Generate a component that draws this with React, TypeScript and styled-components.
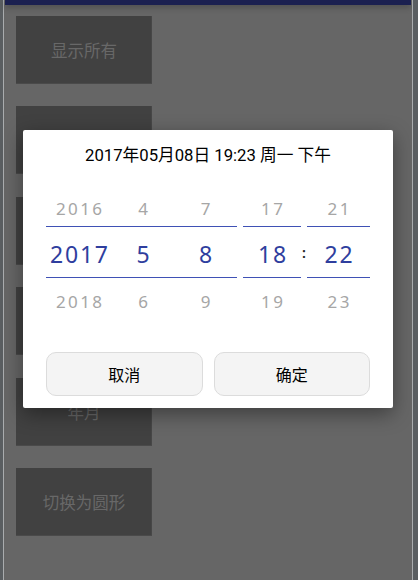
import React from 'react';
import styled, { createGlobalStyle } from 'styled-components';

const Global = createGlobalStyle`
  html, body { margin: 0; padding: 0; }
  body {
    width: 418px;
    height: 580px;
    overflow: hidden;
    font-family: Roboto, "Noto Sans CJK SC", sans-serif;
  }
`;

const Screen = styled.div`
  position: relative;
  width: 418px;
  height: 580px;
  display: flex;
  background: #5a5e61;
`;

const Edge = styled.div<{ $w: number }>`
  flex: none;
  width: ${(p) => p.$w}px;
  background: #5a5e61;
`;

const Rule = styled.div`
  flex: none;
  width: 1px;
  background: #a9acae;
`;

const Content = styled.div`
  flex: 1;
  background: #666666;
  display: flex;
  flex-direction: column;
`;

const TopBar = styled.div`
  height: 5px;
  margin: 0 1px;
  background: #1b2050;
  box-shadow: 0 2px 6px rgba(0, 0, 0, 0.3);
`;

const ButtonList = styled.div`
  display: flex;
  flex-direction: column;
  gap: 22.4px;
  padding: 11px 0 0 12px;
`;

const GhostButton = styled.div`
  width: 136px;
  height: 68px;
  background: #414141;
  color: #686868;
  font-family: "Noto Sans CJK SC", sans-serif;
  font-size: 16.5px;
  display: flex;
  align-items: center;
  justify-content: center;
  box-shadow: inset 0 -1px 0 #4a4a4a, inset -1px 0 0 #474747;
`;

const Dialog = styled.div`
  position: absolute;
  left: 23px;
  top: 130px;
  width: 370px;
  height: 278px;
  background: #ffffff;
  border-radius: 2px;
  box-shadow: 0 6px 20px rgba(0, 0, 0, 0.4);
  display: flex;
  flex-direction: column;
`;

const Title = styled.div`
  height: 48px;
  display: flex;
  align-items: center;
  justify-content: center;
  color: #000;
  font-family: Roboto, "Noto Sans CJK SC", sans-serif;
  font-size: 16.7px;
`;

const Picker = styled.div`
  margin-top: 12px;
  padding: 0 23px;
  display: flex;
`;

const Group = styled.div<{ $w: number }>`
  flex: none;
  width: ${(p) => p.$w}px;
  display: flex;
  flex-direction: column;
`;

const Row = styled.div<{ $cols: string; $kind: 'top' | 'mid' | 'bottom' }>`
  display: grid;
  grid-template-columns: ${(p) => p.$cols};
  height: ${(p) => (p.$kind === 'top' ? 36 : p.$kind === 'mid' ? 52 : 46)}px;
  box-sizing: border-box;
  ${(p) =>
    p.$kind === 'mid'
      ? `border-top: 1px solid #3f51b5; border-bottom: 1px solid #3f51b5; padding-top: 4px;`
      : ''}
`;

const Cell = styled.div<{ $active?: boolean }>`
  display: flex;
  align-items: center;
  justify-content: center;
  font-family: "Noto Sans", "Open Sans", sans-serif;
  font-size: ${(p) => (p.$active ? 23 : 17)}px;
  letter-spacing: ${(p) => (p.$active ? 1.8 : 2.4)}px;
  text-indent: ${(p) => (p.$active ? 1.8 : 2.4)}px;
  color: ${(p) => (p.$active ? '#2f3e9e' : '#a6a6a6')};
`;

const Sep = styled.div`
  flex: none;
  width: 6px;
  display: flex;
  flex-direction: column;
`;

const SepCell = styled.div<{ $h: number }>`
  height: ${(p) => p.$h}px;
  display: flex;
  align-items: center;
  justify-content: center;
  padding-top: ${(p) => (p.$h === 52 ? 2 : 0)}px;
  box-sizing: border-box;
  font-family: Roboto, sans-serif;
  font-size: 14px;
  font-weight: bold;
  color: #222;
`;

const Actions = styled.div`
  margin-top: 28px;
  padding: 0 23px;
  display: flex;
  gap: 11px;
`;

const ActionButton = styled.button`
  flex: 1;
  height: 44px;
  border: 1px solid #dcdcdc;
  border-radius: 10px;
  background: #f4f4f4;
  color: #000;
  font-family: "Noto Sans CJK SC", sans-serif;
  font-size: 16px;
  padding: 0;
`;

type Col = { top: string; mid: string; bottom: string };

const PickerGroup: React.FC<{ w: number; cols: string; data: Col[] }> = ({ w, cols, data }) => (
  <Group $w={w}>
    <Row $cols={cols} $kind="top">
      {data.map((d, i) => (
        <Cell key={i}>{d.top}</Cell>
      ))}
    </Row>
    <Row $cols={cols} $kind="mid">
      {data.map((d, i) => (
        <Cell key={i} $active>
          {d.mid}
        </Cell>
      ))}
    </Row>
    <Row $cols={cols} $kind="bottom">
      {data.map((d, i) => (
        <Cell key={i}>{d.bottom}</Cell>
      ))}
    </Row>
  </Group>
);

// Labels of the buttons hidden behind the dialog are not visible in the reference.
const menu = ['显示所有', '', '', '', '年月', '切换为圆形'];

export default function App() {
  return (
    <>
      <Global />
      <Screen>
        <Edge $w={3} />
        <Rule />
        <Content>
          <TopBar />
          <ButtonList>
            {menu.map((m, i) => (
              <GhostButton key={i}>{m}</GhostButton>
            ))}
          </ButtonList>
        </Content>
        <Rule />
        <Edge $w={5} />

        <Dialog>
          <Title>2017年05月08日 19:23 周一 下午</Title>
          <Picker>
            <PickerGroup
              w={191}
              cols="66px 62px 63px"
              data={[
                { top: '2016', mid: '2017', bottom: '2018' },
                { top: '4', mid: '5', bottom: '6' },
                { top: '7', mid: '8', bottom: '9' },
              ]}
            />
            <Sep />
            <PickerGroup w={58} cols="1fr" data={[{ top: '17', mid: '18', bottom: '19' }]} />
            <Sep>
              <SepCell $h={36} />
              <SepCell $h={52}>:</SepCell>
              <SepCell $h={46} />
            </Sep>
            <PickerGroup w={63} cols="1fr" data={[{ top: '21', mid: '22', bottom: '23' }]} />
          </Picker>
          <Actions>
            <ActionButton>取消</ActionButton>
            <ActionButton>确定</ActionButton>
          </Actions>
        </Dialog>
      </Screen>
    </>
  );
}
